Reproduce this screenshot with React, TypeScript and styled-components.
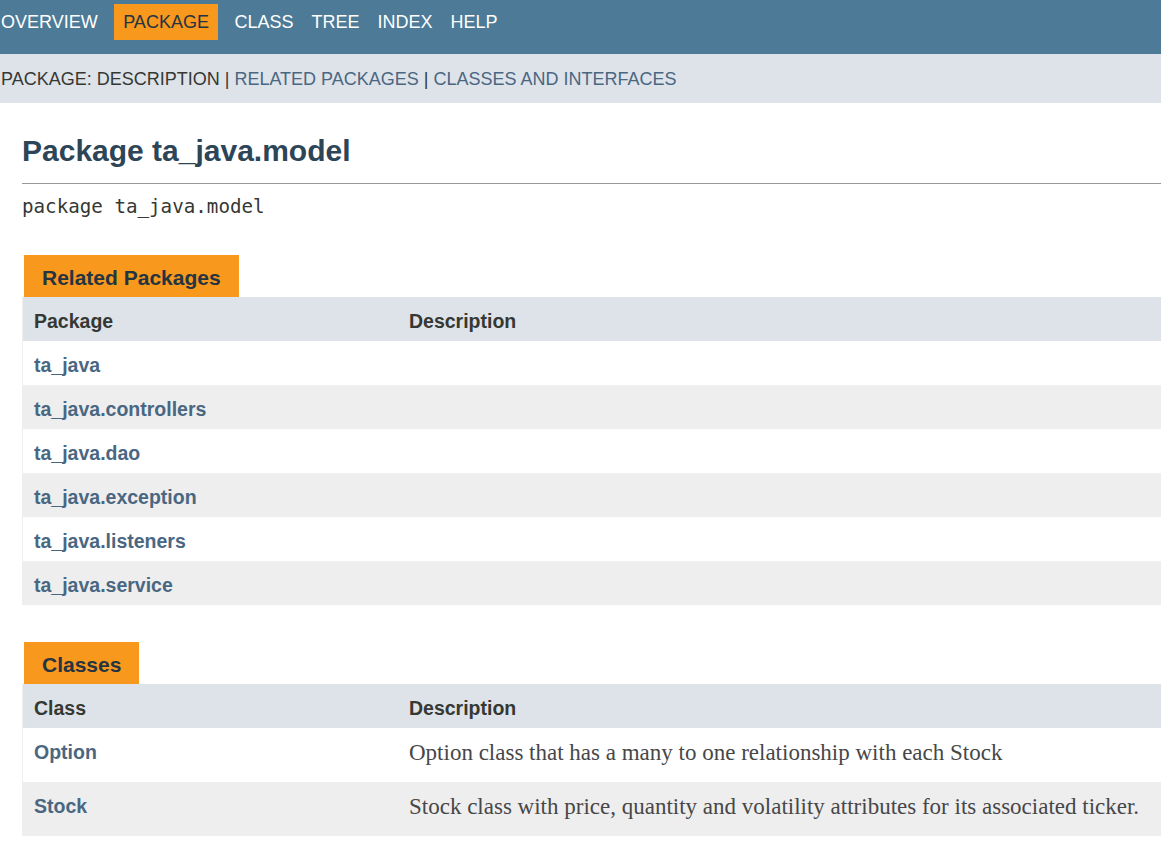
import React from "react";
import styled, { createGlobalStyle } from "styled-components";

const GlobalStyle = createGlobalStyle`
  html, body { margin: 0; padding: 0; background: #ffffff; }
  body { font-family: "Liberation Sans", Arial, sans-serif; color: #353833; }
  * { box-sizing: border-box; }
`;

const TopNav = styled.nav`
  height: 54px;
  background: #4d7a97;
  display: flex;
  align-items: flex-start;
  padding: 4px 0 0 1px;
`;

const NavList = styled.ul`
  list-style: none;
  margin: 0;
  padding: 0;
  display: flex;
  align-items: center;
`;

const NavItem = styled.li<{ $active?: boolean; $first?: boolean }>`
  font-size: 18px;
  line-height: 20.7px;
  text-transform: uppercase;
  color: ${(p) => (p.$active ? "#253441" : "#ffffff")};
  background: ${(p) => (p.$active ? "#f8981d" : "transparent")};
  padding: 7.65px 9px;
  padding-left: ${(p) => (p.$first ? "0" : "9px")};
  margin: ${(p) => (p.$active ? "0 7.5px" : "0")};
`;

const SubNav = styled.div`
  height: 49px;
  background: #dee3e9;
  display: flex;
  align-items: center;
  padding: 1px 0 0 1px;
  font-size: 18px;
  line-height: 20.7px;
  text-transform: uppercase;
  color: #353833;
  white-space: pre;
`;

const SubLink = styled.a`
  color: #4a6782;
  text-decoration: none;
`;

const Main = styled.main`
  padding: 31px 0 0 22px;
`;

const Header = styled.div`
  border-bottom: 1px solid #999999;
  padding-bottom: 14px;
`;

const Title = styled.h1`
  margin: 0;
  font-size: 30px;
  line-height: 34.5px;
  font-weight: bold;
  color: #2c4557;
`;

const PackageSig = styled.div`
  margin-top: 12px;
  font-family: "DejaVu Sans Mono", "Liberation Mono", monospace;
  font-size: 19.2px;
  line-height: 22.7px;
  color: #353833;
`;

const Section = styled.section<{ $gap: number }>`
  margin-top: ${(p) => p.$gap}px;
`;

const Caption = styled.div`
  display: inline-block;
  margin-left: 2px;
  background: #f8981d;
  color: #253441;
  font-weight: bold;
  font-size: 21px;
  line-height: 24px;
  padding: 11px 18px 7px 18px;
  vertical-align: top;
`;

const Table = styled.div`
  display: grid;
  grid-template-columns: 375px 1fr;
  border-left: 1px solid #eeeeee;
`;

const HeadCell = styled.div`
  background: #dee3e9;
  font-weight: bold;
  font-size: 19.5px;
  line-height: 27px;
  padding: 11px 11px 6px;
  color: #353833;
`;

const Cell = styled.div<{ $odd: boolean }>`
  background: ${(p) => (p.$odd ? "#eeeeef" : "#ffffff")};
  font-size: 19.5px;
  line-height: 27px;
  padding: 11px 11px 6px;
`;

const ItemLink = styled.a`
  color: #4a6782;
  font-weight: bold;
  text-decoration: none;
`;

const Block = styled.div`
  font-family: "Liberation Serif", "Times New Roman", serif;
  font-size: 23px;
  line-height: 28.5px;
  color: #474747;
  margin-bottom: 8.5px;
`;

const navItems = ["Overview", "Package", "Class", "Tree", "Index", "Help"];

const relatedPackages = [
  "ta_java",
  "ta_java.controllers",
  "ta_java.dao",
  "ta_java.exception",
  "ta_java.listeners",
  "ta_java.service",
];

const classes = [
  { name: "Option", desc: "Option class that has a many to one relationship with each Stock" },
  { name: "Stock", desc: "Stock class with price, quantity and volatility attributes for its associated ticker." },
];

export default function App() {
  return (
    <>
      <GlobalStyle />
      <TopNav>
        <NavList>
          {navItems.map((n, i) => (
            <NavItem key={n} $active={n === "Package"} $first={i === 0}>
              {n}
            </NavItem>
          ))}
        </NavList>
      </TopNav>
      <SubNav>
        {"Package: Description | "}
        <SubLink href="#related">Related Packages</SubLink>
        {" | "}
        <SubLink href="#classes">Classes and Interfaces</SubLink>
      </SubNav>
      <Main>
        <Header>
          <Title>Package ta_java.model</Title>
        </Header>
        <PackageSig>package ta_java.model</PackageSig>
        <Section $gap={37} id="related">
          <Caption>Related Packages</Caption>
          <Table>
            <HeadCell>Package</HeadCell>
            <HeadCell>Description</HeadCell>
            {relatedPackages.map((p, i) => (
              <React.Fragment key={p}>
                <Cell $odd={i % 2 === 1}>
                  <ItemLink href="#">{p}</ItemLink>
                </Cell>
                <Cell $odd={i % 2 === 1} />
              </React.Fragment>
            ))}
          </Table>
        </Section>
        <Section $gap={37} id="classes">
          <Caption>Classes</Caption>
          <Table>
            <HeadCell>Class</HeadCell>
            <HeadCell>Description</HeadCell>
            {classes.map((c, i) => (
              <React.Fragment key={c.name}>
                <Cell $odd={i % 2 === 1}>
                  <ItemLink href="#">{c.name}</ItemLink>
                </Cell>
                <Cell $odd={i % 2 === 1}>
                  <Block>{c.desc}</Block>
                </Cell>
              </React.Fragment>
            ))}
          </Table>
        </Section>
      </Main>
    </>
  );
}
